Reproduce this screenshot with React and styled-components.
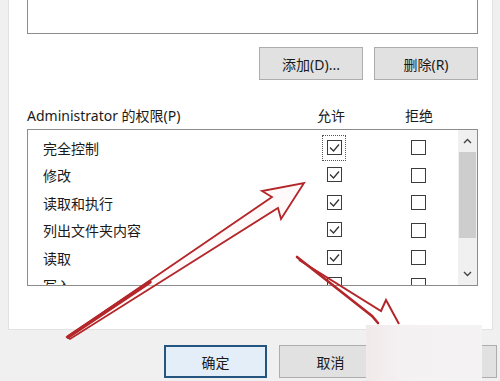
import React from "react";
import styled, { createGlobalStyle } from "styled-components";

const Global = createGlobalStyle`
  html, body {
    margin: 0;
    padding: 0;
    background: #f0f0f0;
  }
  body {
    font-family: "Noto Sans", "Noto Sans CJK SC", sans-serif;
    color: #1a1a1a;
  }
`;

const Screen = styled.div`
  position: relative;
  width: 500px;
  height: 381px;
  overflow: hidden;
  background: #f0f0f0;
`;

const Panel = styled.div`
  margin-left: 8px;
  width: 485px;
  box-sizing: border-box;
  background: #fff;
  border: 1px solid #e2e2e2;
  border-top: none;
  padding: 0 14px 43px 18px;
`;

const NameBox = styled.div`
  height: 34px;
  box-sizing: border-box;
  border: 1px solid #8c8c8c;
  border-top: none;
`;

const ButtonRow = styled.div`
  display: flex;
  justify-content: flex-end;
  gap: 11px;
  margin-top: 13px;
`;

const Button = styled.div`
  width: ${(p) => p.w || 104}px;
  height: 33px;
  box-sizing: border-box;
  display: flex;
  align-items: center;
  justify-content: center;
  font-size: 14px;
  background: ${(p) => (p.primary ? "#e3eef8" : "#e1e1e1")};
  border: ${(p) => (p.primary ? "2px solid #24557f" : "1px solid #adadad")};
  color: #1a1a1a;
`;

const HeaderRow = styled.div`
  display: flex;
  align-items: center;
  height: 22px;
  margin-top: 24px;
  margin-bottom: 3px;
  padding-right: 39px;
  gap: 48px;
  font-size: 14px;
`;

const HeaderLabel = styled.div`
  flex: 1;
  white-space: nowrap;
`;

const ColLabel = styled.div`
  width: 40px;
  text-align: center;
`;

const ListBox = styled.div`
  position: relative;
  height: 157px;
  box-sizing: border-box;
  border: 1px solid #8c8c8c;
  display: flex;
  overflow: hidden;
`;

const Rows = styled.div`
  flex: 1;
  padding-top: 4px;
`;

const Row = styled.div`
  display: flex;
  align-items: center;
  height: 27.5px;
  padding: 0 20px 0 15px;
  gap: 44px;
  font-size: 14px;
`;

const RowName = styled.div`
  flex: 1;
  white-space: nowrap;
`;

const Cell = styled.div`
  width: 40px;
  display: flex;
  justify-content: center;
`;

const Focus = styled.div`
  padding: 4px 3px 5px 4px;
  margin: -6px -5px -6px -5px;
  border: 1px dotted ${(p) => (p.on ? "#555" : "transparent")};
  display: flex;
`;

const Box = styled.div`
  width: 15px;
  height: 15px;
  box-sizing: border-box;
  border: 1px solid #3c3c3c;
  background: #fff;
  display: flex;
  align-items: center;
  justify-content: center;
`;

const ScrollBar = styled.div`
  width: 19px;
  background: #f0f0f0;
  display: flex;
  flex-direction: column;
  align-items: stretch;
`;

const ScrollArrow = styled.div`
  height: 22px;
  display: flex;
  align-items: center;
  justify-content: center;
`;

const Thumb = styled.div`
  margin: 0 1px;
  height: 86px;
  background: #cdcdcd;
`;

const Track = styled.div`
  flex: 1;
`;

const Footer = styled.div`
  display: flex;
  justify-content: flex-end;
  gap: 12px;
  margin-top: 15px;
  padding-right: 3px;
`;

const Patch = styled.div`
  position: absolute;
  left: 366px;
  top: 325px;
  width: 116px;
  height: 56px;
  background: linear-gradient(90deg, #f1e9ea 0%, #f4f1f2 30%, #f4f3f3 100%);
`;

const Overlay = styled.svg`
  position: absolute;
  left: 0;
  top: 0;
  pointer-events: none;
`;

const Check = () => (
  <svg width="13" height="13" viewBox="0 0 13 13">
    <polyline points="2,6.5 5.5,10 11,3.5" fill="none" stroke="#333" strokeWidth="1.3" />
  </svg>
);

const Chevron = ({ up }) => (
  <svg width="9" height="6" viewBox="0 0 9 6">
    <polyline
      points={up ? "1,5 4.5,1.5 8,5" : "1,1 4.5,4.5 8,1"}
      fill="none"
      stroke="#444"
      strokeWidth="1.4"
    />
  </svg>
);

const perms = ["完全控制", "修改", "读取和执行", "列出文件夹内容", "读取", "写入"];

const App = () => {
  return (
    <Screen>
      <Global />
      <Panel>
        <NameBox />
        <ButtonRow>
          <Button>添加(D)...</Button>
          <Button>删除(R)</Button>
        </ButtonRow>
        <HeaderRow>
          <HeaderLabel>Administrator 的权限(P)</HeaderLabel>
          <ColLabel>允许</ColLabel>
          <ColLabel>拒绝</ColLabel>
        </HeaderRow>
        <ListBox>
          <Rows>
            {perms.map((p, i) => (
              <Row key={p}>
                <RowName>{p}</RowName>
                <Cell>
                  <Focus on={i === 0}>
                    <Box>{i < 5 && <Check />}</Box>
                  </Focus>
                </Cell>
                <Cell>
                  <Box />
                </Cell>
              </Row>
            ))}
          </Rows>
          <ScrollBar>
            <ScrollArrow>
              <Chevron up />
            </ScrollArrow>
            <Thumb />
            <Track />
            <ScrollArrow>
              <Chevron />
            </ScrollArrow>
          </ScrollBar>
        </ListBox>
      </Panel>
      <Footer>
        <Button primary w={103}>确定</Button>
        <Button w={103}>取消</Button>
        <Button w={103}>应用(A)</Button>
      </Footer>
      <Patch />
      <Overlay width="500" height="381" viewBox="0 0 500 381">
        <polygon
          points="67,337 272,197 262,191 304,183 281,219 278,208 70,339"
          fill="rgba(255,240,240,0.4)"
          stroke="#b3262a"
          strokeWidth="1.8"
          strokeLinejoin="miter"
        />
        <line x1="68" y1="337" x2="150" y2="282" stroke="#b3262a" strokeWidth="3.5" strokeLinecap="round" />
        <polyline points="297,257 372,316 378,323" fill="none" stroke="#b3262a" strokeWidth="2.6" strokeLinecap="round" />
        <polyline points="299,260 381,311 386,300 399,324" fill="none" stroke="#b3262a" strokeWidth="2" />
      </Overlay>
    </Screen>
  );
};

export default App;
